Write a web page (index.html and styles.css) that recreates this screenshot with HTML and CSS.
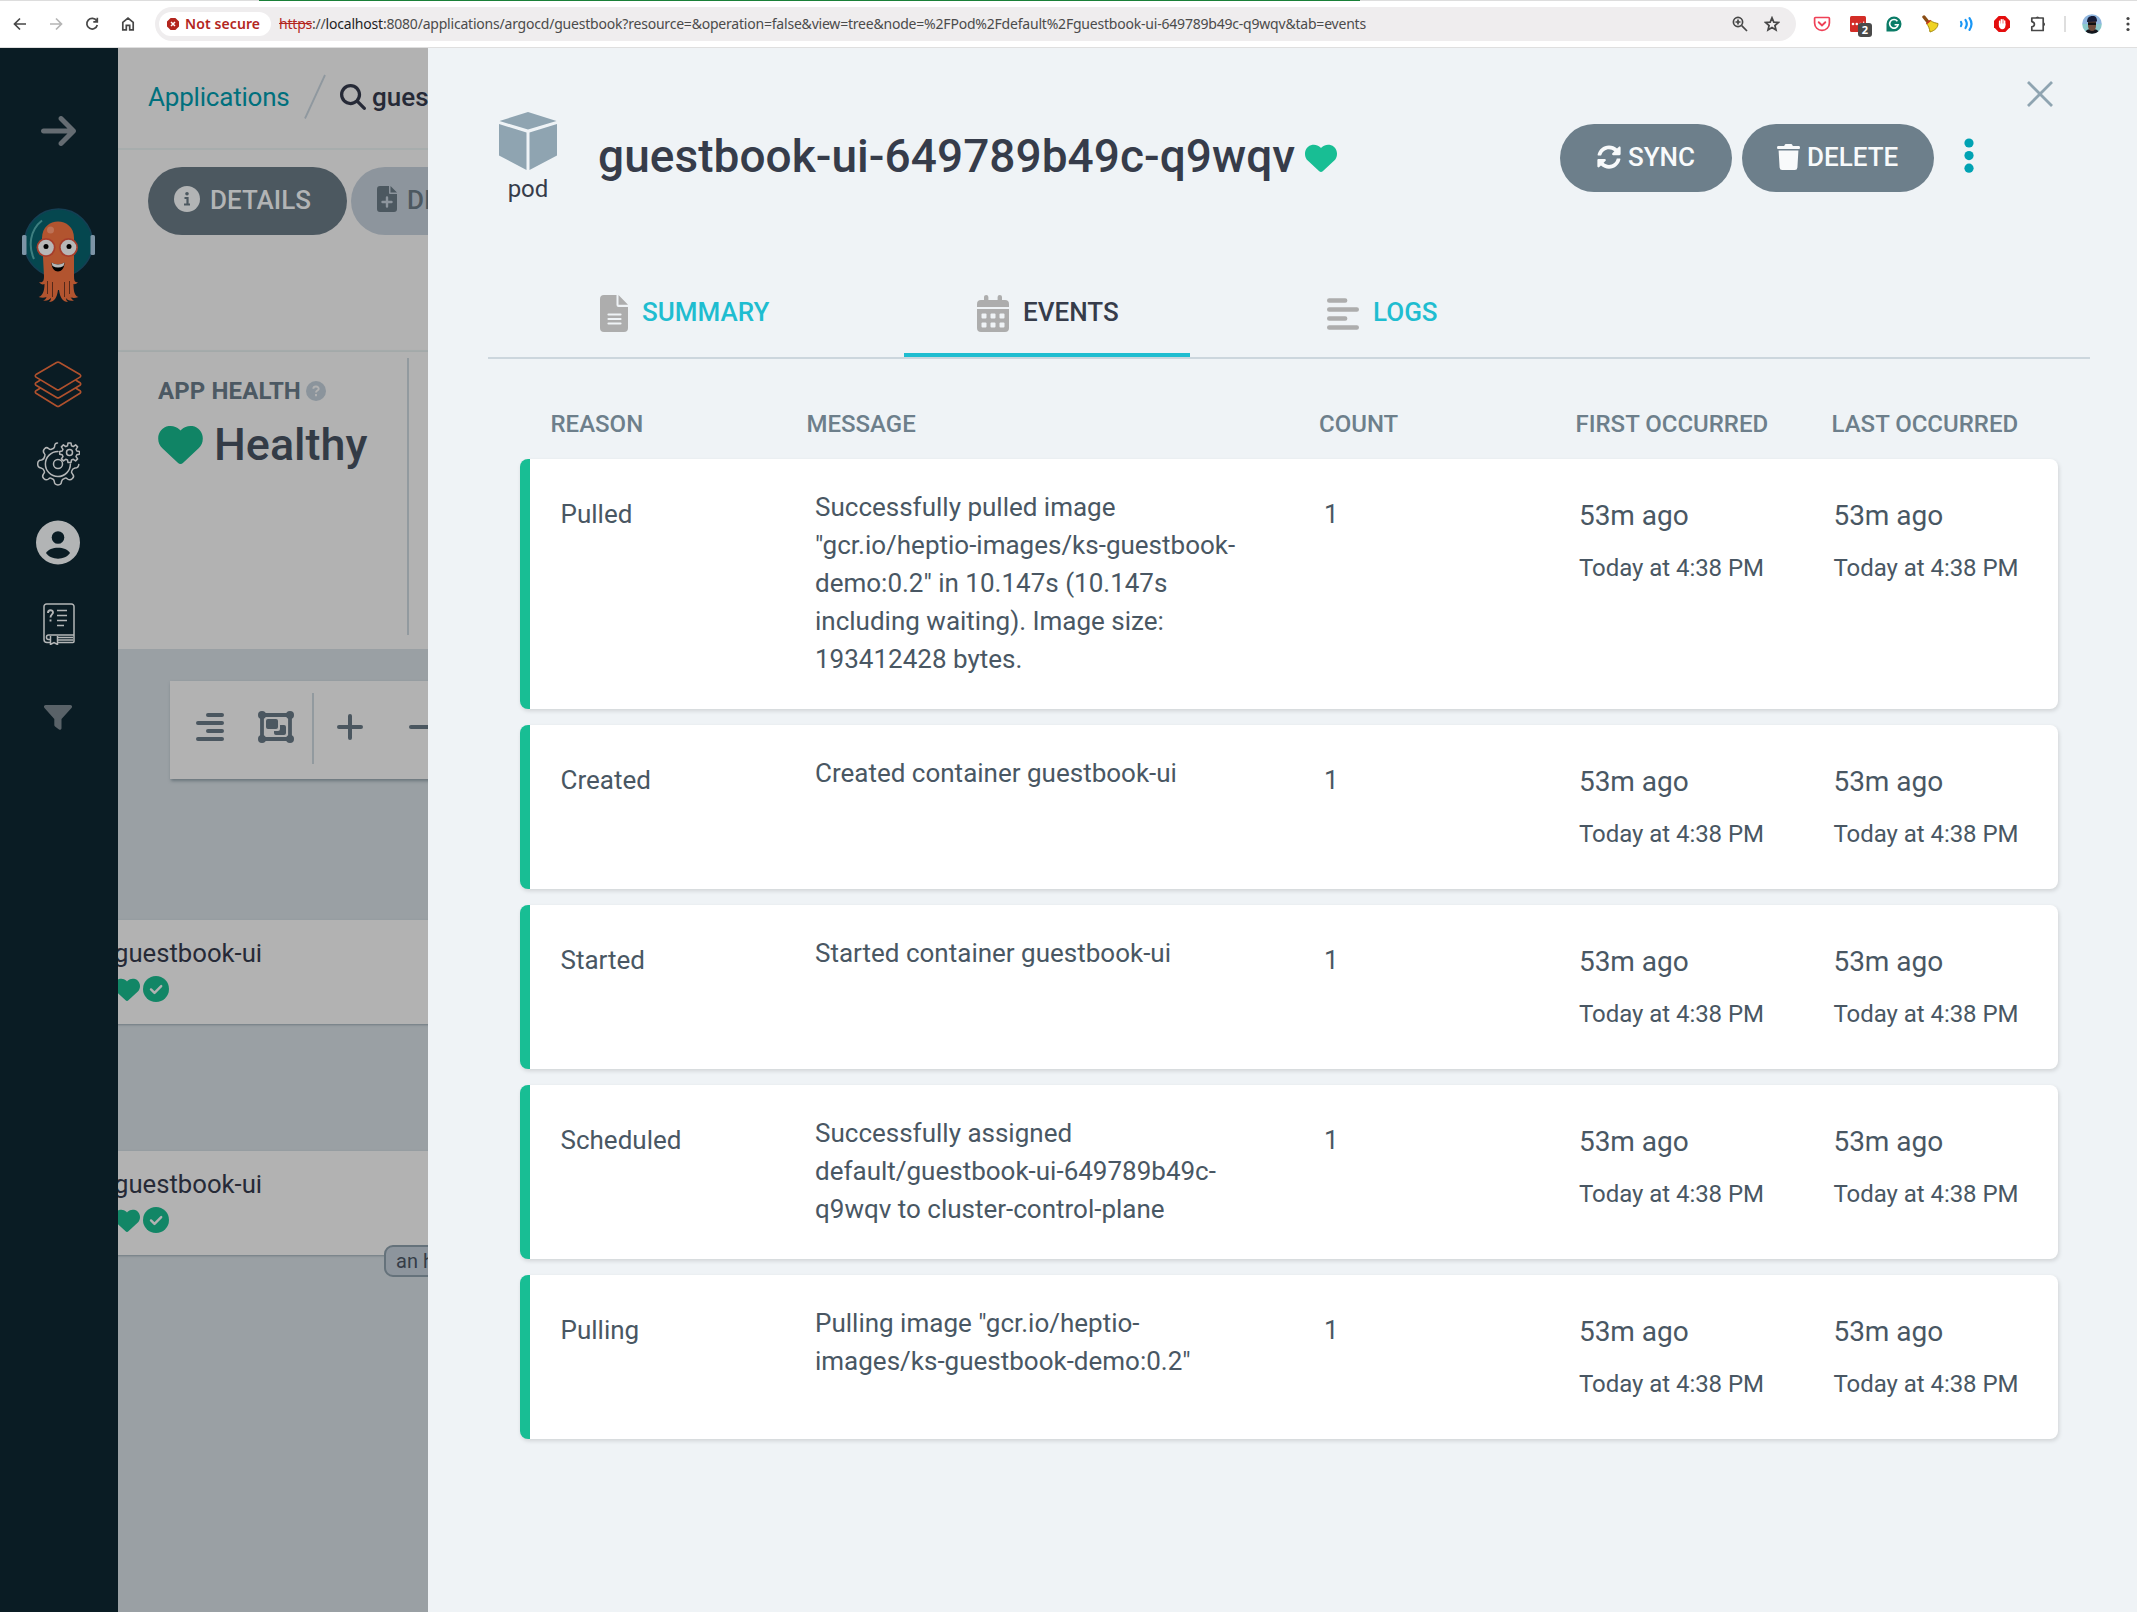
FILE: index.html
```html
<!DOCTYPE html>
<html lang="en">
<head>
<meta charset="utf-8">
<title>guestbook - Argo CD</title>
<link rel="stylesheet" href="styles.css">
</head>
<body>
<svg class="defs" width="0" height="0">
  <symbol id="heart" viewBox="0 32 512 448"><path d="M47.6 300.4L228.3 469.1c7.500 7 17.400 10.900 27.700 10.900s20.200-3.900 27.700-10.900L464.400 300.400c30.400-28.300 47.600-68 47.600-109.500v-5.800c0-69.900-50.500-129.500-119.400-141C347 36.500 300.600 51.400 268 84L256 96 244 84c-32.600-32.600-79-47.500-124.600-39.900C50.500 55.600 0 115.200 0 185.100v5.800c0 41.500 17.200 81.200 47.600 109.500z"/></symbol>
  <symbol id="check" viewBox="0 0 26 26"><circle cx="13" cy="13" r="13"/><path d="M8 13.400l3.500 3.500 6.700-6.800" fill="none" stroke="#b2b2b2" stroke-width="2.400" stroke-linecap="round" stroke-linejoin="round"/></symbol>
</svg>

<header class="browser">
  <div class="nav">
    <svg width="16" height="16" viewBox="0 0 16 16"><path d="M14 8H3M8 2.500L2.500 8 8 13.500"/></svg>
    <svg class="dim" width="16" height="16" viewBox="0 0 16 16"><path d="M2 8h11M8 2.500L13.500 8 8 13.500"/></svg>
    <svg width="16" height="16" viewBox="0 0 16 16"><path d="M12.600 4.800A5.300 5.300 0 1 0 13.300 9M13.300 1.800v4h-4"/></svg>
    <svg width="16" height="16" viewBox="0 0 16 16"><path d="M2.800 13.800V6.300L8 2.200l5.200 4.100v7.500H9.700V9.300H6.300v4.500z"/></svg>
  </div>
  <div class="omnibox">
    <div class="chip">
      <svg width="12" height="12" viewBox="0 0 12 12"><path d="M3.600 0h4.800L12 3.600v4.800L8.400 12H3.600L0 8.400V3.600z" fill="#b3261e"/><path d="M4 4l4 4M8 4L4 8" stroke="#fff" stroke-width="1.500"/></svg>
      <span>Not secure</span>
    </div>
    <div class="url"><s>https</s>://<b>localhost</b>:8080/applications/argocd/guestbook?resource=&amp;operation=false&amp;view=tree&amp;node=%2FPod%2Fdefault%2Fguestbook-ui-649789b49c-q9wqv&amp;tab=events</div>
    <svg class="zoomic" width="16" height="16" viewBox="0 0 16 16"><path d="M9.700 9.700L15 15M3.500 6h5M6 3.500v5"/><circle cx="6" cy="6" r="4.600"/></svg>
    <svg class="star" width="16" height="16" viewBox="0 0 16 16"><path d="M8 1.800l1.800 4.300 4.600.4-3.500 3 1.100 4.500L8 11.600 4 14l1.100-4.500-3.500-3 4.600-.4z"/></svg>
  </div>
  <div class="extensions">
    <svg width="18" height="18" viewBox="0 0 18 18"><path d="M2.500 2.500h13a.9.9 0 0 1 .9.900V8a7.400 7.400 0 0 1-14.800 0V3.400a.9.9 0 0 1 .9-.9z" fill="none" stroke="#ef4056" stroke-width="1.700"/><path d="M5.700 7.200L9 10.400l3.300-3.200" fill="none" stroke="#ef4056" stroke-width="1.900" stroke-linecap="round"/></svg>
    <div class="ext"><svg width="18" height="18" viewBox="0 0 18 18"><rect x="1" y="1" width="16" height="16" rx="1.500" fill="#d32d27"/><g fill="#fff"><circle cx="4" cy="9" r="1.300"/><circle cx="7.800" cy="9" r="1.300"/><circle cx="11.600" cy="9" r="1.300"/><rect x="14.200" y="6.500" width="1" height="4"/></g></svg><span class="count">2</span></div>
    <svg width="18" height="18" viewBox="0 0 18 18"><path d="M9 1.500A7.500 7.500 0 1 1 9 16.500H1.500V9A7.500 7.500 0 0 1 9 1.500z" fill="#0b7c67"/><path d="M12.400 6.200A4.300 4.300 0 1 0 13.200 9.700H9.600" fill="none" stroke="#fff" stroke-width="1.600"/></svg>
    <svg width="18" height="18" viewBox="0 0 18 18"><path d="M3 2l4 5" stroke="#8a4d14" stroke-width="3.400" stroke-linecap="round"/><path d="M5.500 8.500L9.500 5.500C12 7.500 14.500 8 17 8.500c0 4-3 7-8 8.500C8.500 13.500 7.500 11 5.500 8.500z" fill="#f0d321" stroke="#a68a10"/><path d="M5.400 8.600L9.500 5.400" stroke="#c8321b" stroke-width="1.500"/></svg>
    <svg width="18" height="18" viewBox="0 0 18 18" fill="none" stroke="#1a97f5" stroke-width="2.200" stroke-linecap="round"><path d="M4 7q1.300 2 0 4M8.500 5q2.600 4 0 8M12.500 3.200q4 5.800 0 11.600"/></svg>
    <svg width="18" height="18" viewBox="0 0 18 18"><path d="M5.700 1h6.600L17 5.700v6.600L12.300 17H5.700L1 12.300V5.700z" fill="#e40d0d"/><path d="M6.600 10V6.200M8.300 9V4.600M10 9V4.600M11.700 10V6" stroke="#fff" stroke-width="1.400" stroke-linecap="round"/><path d="M5.900 8.500h6.500V11c0 2-1.300 3.200-3.100 3.200-2 0-3.400-1.700-3.400-3.700z" fill="#fff"/></svg>
    <svg class="puzzle" width="18" height="18" viewBox="0 0 18 18"><path d="M2.800 3h11.400v12.500H2.800v-3.700q2.600-.5 2.600-2.600T2.800 6.600z" stroke-linejoin="round"/><path d="M6.600 3a2 2 0 0 1 3.900 0zM14.500 7.300a2 2 0 0 1 0 3.900z" fill="#474747" stroke="none"/></svg>
    <i class="bar"></i>
    <svg width="20" height="20" viewBox="0 0 20 20"><clipPath id="av"><circle cx="10" cy="10" r="9.800"/></clipPath><g clip-path="url(#av)"><path fill="#8fb6df" d="M0 0h20v10H0z"/><path fill="#8ac9cb" d="M0 10h20v10H0z"/><path fill="#15161d" d="M3 20c0-4 3-5 7-5s7 1 7 5z"/><path fill="#6e4c3c" d="M6 7h8v5c0 3-2 5-4 5s-4-2-4-5z"/><path fill="#161c37" d="M5 8c0-4 2-6 5.500-6S15 4 15 7.500z"/><path fill="#111" d="M6 8.500h8V11H6z"/></g></svg>
    <svg class="kebab" width="4" height="16" viewBox="0 0 4 16"><circle cx="2" cy="2.500" r="1.600"/><circle cx="2" cy="8" r="1.600"/><circle cx="2" cy="13.500" r="1.600"/></svg>
  </div>
</header>

<div class="app">
  <nav class="sidebar">
    <svg class="s-arrow" width="35" height="30" viewBox="0 64 448 384"><path fill="#656c72" d="M438.600 278.600c12.500-12.500 12.500-32.800 0-45.300l-160-160c-12.500-12.500-32.800-12.500-45.300 0s-12.500 32.800 0 45.300L338.800 224 32 224c-17.700 0-32 14.300-32 32s14.300 32 32 32l306.700 0L233.400 393.400c-12.500 12.500-12.500 32.800 0 45.300s32.800 12.500 45.300 0l160-160z"/></svg>
    <svg class="s-logo" width="74" height="96" viewBox="0 0 74 96">
      <circle cx="36.500" cy="35" r="34" fill="#05474f" stroke="#153f54" stroke-width="1.500"/>
      <rect x="0" y="27" width="4.500" height="20" rx="1.500" fill="#7d94a6"/><rect x="68.500" y="27" width="4.500" height="20" rx="1.500" fill="#7d94a6"/>
      <path d="M20 12.500C8 22 6 38 12 51" fill="none" stroke="#3e7f80" stroke-width="2"/>
      <path d="M20 30C20 8 52 8 52 30v38c0 5 1 7 4 6-2 3-4 2-4.500 2 0 7 1 12 5 13-4 1.500-7 1-8 0 1 2 2 3 3.500 3.500-4 1-7-.5-8-2.500 0 2 1 3 2 4-5 0-8-4-9-12h-1c-1 8-4 12-9 12 1-1 2-2 2-4-2 2-4 3-8 2.500 2-.5 3-1.500 3.500-3.500-2 1-5 1-8 0 4-1 6-6 6-13-2 1-4 0-5.500-2 4 1 5-1 5-6z" fill="#b2542f"/>
      <g stroke="#55291a" stroke-width="1"><path d="M25.500 73v13M30.500 74v15M42.500 74v15M47.500 73v13"/></g>
      <circle cx="28.500" cy="22" r="3.500" fill="#bd7256"/>
      <circle cx="24" cy="39.500" r="9.500" fill="#a63d2b"/><circle cx="46.500" cy="39.500" r="9.500" fill="#a63d2b"/>
      <circle cx="24" cy="39.500" r="7.800" fill="#b7b7b7"/><circle cx="46.500" cy="39.500" r="7.800" fill="#b7b7b7"/>
      <circle cx="24" cy="38.500" r="2.500"/><circle cx="47" cy="38.500" r="2.500"/>
      <path d="M29.500 54.500q6.500 4 13 0c0 12-13 12-13 0z"/><path d="M29.500 54.500q6.500 4 13 0l-1 3.500q-5.500 3-11 0z" fill="#b7b7b7"/>
    </svg>
    <svg class="s-layers" width="48" height="48" viewBox="0 0 48 48" fill="none" stroke="#b0512d" stroke-width="1.600" stroke-linejoin="round"><path d="M22.600 1.500q1.400-.7 2.800 0L46 13.500q1.500 1.200 0 2.600L25.400 28.500q-1.400.8-2.800 0L2 16.100q-1.500-1.400 0-2.600z"/><path d="M6.500 19L2 21.700q-1.500 1.200 0 2.600l20.600 12.200q1.400.8 2.800 0L46 24.300q1.500-1.400 0-2.600L41.500 19"/><path d="M6.500 27L2 29.700q-1.500 1.200 0 2.600l20.600 12.700q1.400.8 2.800 0L46 32.300q1.500-1.400 0-2.600L41.500 27"/></svg>
    <svg class="s-gears" width="44" height="44" viewBox="0 0 44 44" fill="none" stroke="#b4b6b7" stroke-width="1.500" stroke-linejoin="round" stroke-linecap="round"><circle cx="22" cy="22" r="4.500"/><path d="M22 9.500A12.500 12.500 0 1 0 34.400 22"/><path d="M21.500 1q-3 0-3 4-.5 1.500-3 2.300Q14 8 12.500 6.500C10 4 6 8 8 11q1.500 1.500.8 3Q8 17.500 5.500 18C.5 18 .5 25.500 5 26q2.500.5 3.300 3 .7 1.500-.8 3C5 35 9 39.500 12.500 37q1.500-1.500 3-.5 2.500.5 2.800 3C18.500 44 25.500 44 25.500 39.500q.5-2.500 3-3 1.500-1 3 .5C35 39.500 39.500 35 36.500 32q-1.500-1.500-.8-3 .8-2.500 3.300-3 3.500 0 3.800-3.500"/><circle cx="33.500" cy="10.500" r="3"/><path d="M32 1h3l.5 2.800 1.800.8 2.300-1.700 2 2-1.600 2.400.8 1.700 2.700.5v2.700l-2.700.6-.8 1.700 1.600 2.400-2 2-2.300-1.600-1.800.7L35 20.500h-3l-.5-2.500-1.800-.7-2.300 1.600-2-2 1.600-2.400-.8-1.700-2.500-.6V9.500l2.500-.5.8-1.700-1.600-2.400 2-2 2.300 1.700 1.800-.8z"/></svg>
    <svg class="s-user" width="44" height="45" viewBox="0 0 44 44"><circle cx="22" cy="22" r="22" fill="#b2b4b5"/><circle cx="22" cy="17" r="6.300" fill="#0a1c24"/><path d="M10 32.500c4-7 20-7 24 0-5 7.500-19 7.500-24 0z" fill="#0a1c24"/></svg>
    <svg class="s-book" width="32" height="42" viewBox="0 0 32 42" fill="none" stroke="#b4b6b7" stroke-width="1.500"><path d="M7 39.500H4a3 3 0 0 1-3-3V3.500A2.500 2.500 0 0 1 3.500 1h25A2.500 2.500 0 0 1 31 3.500v35a1 1 0 0 1-1 1H15"/><path d="M31 32H5.500a2 2 0 0 0-2 2v.5a2 2 0 0 0 2 2H7M15 34.500h15M15 37h15M7.500 33v8.500l3.500-2 3.500 2V33M14 7.500h10M14 12.500h10M14 17.500h10M14 22.500h7"/><path d="M5 10c0-3.500 5-3.500 5-.5 0 2-2.500 2-2.500 5M7.500 16.500v2" stroke-width="1.900"/></svg>
    <svg class="s-filter" width="28" height="25" viewBox="0 0 28 25"><path d="M1.500 0h25Q29 .5 27.500 3L17.500 14v9.500Q17 25.500 15 24.500l-4-3q-.7-.6-.7-1.500v-6L.5 3Q-1 .5 1.500 0z" fill="#596268"/></svg>
  </nav>

  <main class="backdrop">
    <div class="crumbs">
      <span class="link">Applications</span>
      <svg class="slash" width="22" height="46" viewBox="0 0 22 46"><path d="M21 1L1 44.500" stroke="#8f989f" stroke-width="1.800"/></svg>
      <svg class="search" width="26" height="26" viewBox="0 0 512 512"><path d="M416 208c0 45.900-14.900 88.300-40 122.700L502.600 457.400c12.500 12.500 12.500 32.800 0 45.300s-32.800 12.500-45.300 0L330.700 376c-34.400 25.200-76.800 40-122.700 40C93.100 416 0 322.900 0 208S93.100 0 208 0S416 93.100 416 208zM208 352a144 144 0 1 0 0-288 144 144 0 1 0 0 288z"/></svg>
      <span class="current">guestbook</span>
    </div>
    <div class="actions">
      <div class="pill"><svg width="26" height="26" viewBox="0 0 26 26"><circle cx="13" cy="13" r="13" fill="#b2b4b5"/><circle cx="13" cy="7.800" r="1.800" fill="#4c5860"/><path d="M10.500 12h3v6M10 18.500h6" stroke="#4c5860" stroke-width="2.200" fill="none"/></svg><span>DETAILS</span></div>
      <div class="pill light"><svg width="20" height="26" viewBox="0 0 20 26"><path d="M3 0h9v7q0 1 1 1h7v15q0 3-3 3H3q-3 0-3-3V3Q0 0 3 0zM13.500 0L20 6.500h-6.500z"/><path d="M10 11.500v9M5.500 16h9" stroke="#8d959d" stroke-width="2.400" stroke-linecap="round"/></svg><span>DIFF</span></div>
    </div>
    <div class="status">
      <section>
        <h4>APP HEALTH <svg width="20" height="20" viewBox="0 0 20 20"><circle cx="10" cy="10" r="10" fill="#8b949c"/><path d="M7.300 7.700c.2-3.200 5.600-2.800 5.400.2-.1 1.700-2.700 1.700-2.700 3.600M10 13v2.200" fill="none" stroke="#b2b2b2" stroke-width="1.900"/></svg></h4>
        <p><svg width="45" height="39"><use href="#heart"/></svg>Healthy</p>
      </section>
    </div>
    <div class="canvas">
      <div class="toolbar">
        <svg class="t-align" width="28" height="28" viewBox="0 0 28 28"><path d="M12 2h14M2 10h24M12 18h14M2 26h24"/></svg>
        <svg class="t-group" width="36" height="32" viewBox="0 0 36 32"><path d="M4 4h28v24H4z" fill="none" stroke="#4b5760" stroke-width="3.800"/><circle cx="4" cy="4" r="4"/><circle cx="32" cy="4" r="4"/><circle cx="4" cy="28" r="4"/><circle cx="32" cy="28" r="4"/><rect x="8" y="8" width="12" height="10" rx="2"/><path d="M22 14h4q2 0 2 2v6q0 2-2 2h-8q-2 0-2-2v-2h4q2 0 2-2z"/></svg>
        <i></i>
        <svg class="t-plus" width="26" height="26" viewBox="0 0 26 26"><path d="M13 2v22M2 13h22"/></svg>
        <svg class="t-minus" width="26" height="26" viewBox="0 0 26 26"><path d="M2 13h22"/></svg>
      </div>
      <div class="node first"><span>guestbook-ui</span><div><svg width="26" height="23"><use href="#heart"/></svg><svg width="26" height="26"><use href="#check"/></svg></div></div>
      <div class="node second"><span>guestbook-ui</span><div><svg width="26" height="23"><use href="#heart"/></svg><svg width="26" height="26"><use href="#check"/></svg></div></div>
      <div class="age">an hour</div>
    </div>
  </main>

  <aside class="panel">
    <svg class="close" width="26" height="26" viewBox="0 0 26 26"><path d="M1 1l24 24M25 1L1 25"/></svg>
    <div class="head">
      <div class="kind">
        <svg width="58" height="58" viewBox="0 0 58 58"><path d="M29 0L57.500 9 29 17.500.5 9zM0 12l27.500 8.500V58L0 43.500zM58 12l-27.500 8.500V58L58 43.500z" fill="#8fa4b1"/></svg>
        <span>pod</span>
      </div>
      <h1>guestbook-ui-649789b49c-q9wqv</h1>
      <svg class="health" width="32" height="28"><use href="#heart"/></svg>
      <div class="buttons">
        <button><svg width="24" height="24" viewBox="0 0 512 512"><path d="M370.720 133.280C339.458 104.008 298.888 87.962 255.848 88c-77.458.068-144.328 53.178-162.791 126.850-1.344 5.363-6.122 9.150-11.651 9.150H24.103c-7.498 0-13.194-6.807-11.807-14.176C33.933 94.924 134.813 8 256 8c66.448 0 126.791 26.136 171.315 68.685L463.030 40.970C478.149 25.851 504 36.559 504 57.941V192c0 13.255-10.745 24-24 24H345.941c-21.382 0-32.090-25.851-16.971-40.971l41.750-41.749zM32 296h134.059c21.382 0 32.090 25.851 16.971 40.971l-41.750 41.750c31.262 29.273 71.835 45.319 114.876 45.280 77.418-.070 144.315-53.144 162.787-126.849 1.344-5.363 6.122-9.150 11.651-9.150h57.304c7.498 0 13.194 6.807 11.807 14.176C478.067 417.076 377.187 504 256 504c-66.448 0-126.791-26.136-171.315-68.685L48.970 471.030C33.851 486.149 8 475.441 8 454.059V320c0-13.255 10.745-24 24-24z"/></svg><span>SYNC</span></button>
        <button><svg class="trash" width="23" height="26" viewBox="0 0 23 26"><path d="M7.500 1.200Q8 0 9 0h5q1 0 1.500 1.200l.3.700H22q1 0 1 1.600T22 5H1Q0 5 0 3.500t1-1.600h6.200zM1.600 6.500h19.800l-1 17q-.2 2.500-2.600 2.500H5.200q-2.400 0-2.600-2.500z"/></svg><span>DELETE</span></button>
        <svg class="more" width="10" height="36" viewBox="0 0 10 36"><circle cx="5" cy="5" r="4.600"/><circle cx="5" cy="17.600" r="4.600"/><circle cx="5" cy="30.200" r="4.600"/></svg>
      </div>
    </div>
    <div class="tabs">
      <div class="tab summary"><svg width="28" height="37" viewBox="0 0 28 37"><path d="M4 0h12.500v10q0 2 2 2H28v21q0 4-4 4H4q-4 0-4-4V4Q0 0 4 0zM18.500 0L28 9.700h-9.500z"/><path d="M8.500 19.500h12M8.500 24h12M8.500 28.500h12" stroke="#eff3f6" stroke-width="2.200" stroke-linecap="round"/></svg>SUMMARY</div>
      <div class="tab active"><svg width="32" height="37" viewBox="0 0 32 37"><path d="M4 5h3V2q0-2 2.200-2t2.200 2v3h9.200V2q0-2 2.200-2T25 2v3h3q4 0 4 4v3H0V9q0-4 4-4zM0 14h32v19q0 4-4 4H4q-4 0-4-4z"/><g fill="#eff3f6"><rect x="4.500" y="18.500" width="5" height="5" rx="1"/><rect x="13.500" y="18.500" width="5" height="5" rx="1"/><rect x="22.500" y="18.500" width="5" height="5" rx="1"/><rect x="4.500" y="27.500" width="5" height="5" rx="1"/><rect x="13.500" y="27.500" width="5" height="5" rx="1"/><rect x="22.500" y="27.500" width="5" height="5" rx="1"/></g></svg>EVENTS</div>
      <div class="tab logs"><svg width="32" height="32" viewBox="0 0 32 32"><path d="M2.200 2.500h16M2.200 11.500h27.600M2.200 20.500h16M2.200 29.500h27.600" stroke="#adadad" stroke-width="4.400" stroke-linecap="round"/></svg>LOGS</div>
    </div>
    <div class="table">
      <div class="thead"><span>REASON</span><span>MESSAGE</span><span>COUNT</span><span>FIRST OCCURRED</span><span>LAST OCCURRED</span></div>
      <div class="row"><span>Pulled</span><p>Successfully pulled image<br>"gcr.io/heptio-images/ks-guestbook-<br>demo:0.2" in 10.147s (10.147s<br>including waiting). Image size:<br>193412428 bytes.</p><span>1</span><div><b>53m ago</b><small>Today at 4:38 PM</small></div><div><b>53m ago</b><small>Today at 4:38 PM</small></div></div>
      <div class="row"><span>Created</span><p>Created container guestbook-ui</p><span>1</span><div><b>53m ago</b><small>Today at 4:38 PM</small></div><div><b>53m ago</b><small>Today at 4:38 PM</small></div></div>
      <div class="row"><span>Started</span><p>Started container guestbook-ui</p><span>1</span><div><b>53m ago</b><small>Today at 4:38 PM</small></div><div><b>53m ago</b><small>Today at 4:38 PM</small></div></div>
      <div class="row"><span>Scheduled</span><p>Successfully assigned<br>default/guestbook-ui-649789b49c-<br>q9wqv to cluster-control-plane</p><span>1</span><div><b>53m ago</b><small>Today at 4:38 PM</small></div><div><b>53m ago</b><small>Today at 4:38 PM</small></div></div>
      <div class="row"><span>Pulling</span><p>Pulling image "gcr.io/heptio-<br>images/ks-guestbook-demo:0.2"</p><span>1</span><div><b>53m ago</b><small>Today at 4:38 PM</small></div><div><b>53m ago</b><small>Today at 4:38 PM</small></div></div>
    </div>
  </aside>
</div>
</body>
</html>
```

FILE: styles.css
```css
* { box-sizing: border-box; }
body { margin: 0; width: 2137px; height: 1612px; overflow: hidden; display: flex; flex-direction: column; font-family: Roboto, sans-serif; }
h1, h4, p { margin: 0; }
svg { display: block; flex: none; }
.defs { position: absolute; }

/* Browser toolbar */
.browser { height: 48px; flex: none; display: flex; align-items: center; background: linear-gradient(90deg, #ddd 259px, #1a8038 259px, #1a8038 1360px, #ddd 1360px) top / 100% 1px no-repeat #fff; border-bottom: 1px solid #dfdfdf; font-family: "Noto Sans", sans-serif; }
.nav { width: 155px; padding-left: 12px; display: flex; gap: 20px; }
.nav svg, .zoomic, .star, .puzzle { fill: none; stroke: #474747; stroke-width: 1.7; }
.nav .dim { stroke: #b5b5b5; }
.omnibox { width: 1641px; height: 34px; border-radius: 17px; background: #efedee; display: flex; align-items: center; padding-left: 4px; }
.chip { flex: none; width: 112px; height: 24px; border-radius: 12px; background: #fff; display: flex; align-items: center; padding-left: 8px; gap: 6px; color: #b3261e; font-size: 14px; font-weight: 600; letter-spacing: .1px; white-space: nowrap; }
.url { flex: none; margin-left: 8px; width: 1453px; font-size: 14px; color: #4b4b4b; white-space: nowrap; letter-spacing: -.207px; }
.url s { color: #b3261e; }
.url b { color: #1f1f1f; font-weight: 400; }
.star { margin-left: 16px; }
.extensions { display: flex; align-items: center; gap: 18px; margin-left: 17px; }
.ext { position: relative; }
.count { position: absolute; left: 9px; top: 8px; width: 14px; height: 14px; border-radius: 3px; background: #4a4a4a; color: #fff; font-size: 11px; font-weight: 700; line-height: 14px; text-align: center; }
.bar { width: 2px; height: 16px; background: #dedede; margin: 0 -1.5px; }
.kebab { fill: #444; margin-left: 6px; }

.app { flex: 1; display: flex; }

/* Sidebar */
.sidebar { width: 118px; background: #0a1c24; display: flex; flex-direction: column; align-items: flex-start; }
.s-arrow { margin: 68px 0 0 41px; }
.s-logo { margin: 62px 0 0 22px; }
.s-layers { margin: 57px 0 0 34px; }
.s-gears { margin: 33px 0 0 36px; }
.s-user { margin: 34px 0 0 36px; }
.s-book { margin: 38px 0 0 43px; }
.s-filter { margin: 60px 0 0 44px; }

/* Dimmed application page */
.backdrop { width: 310px; overflow: hidden; background: #b2b2b2; display: flex; flex-direction: column; white-space: nowrap; }
.crumbs { height: 102px; flex: none; border-bottom: 2px solid #a7adad; padding: 0 0 2px 30px; display: flex; align-items: center; font-size: 26px; }
.link { color: #00707d; width: 141px; letter-spacing: -.2px; }
.slash { margin-left: 15px; }
.search { margin-left: 14px; fill: #262a37; }
.current { margin-left: 6px; font-weight: 500; color: #262a37; }
.actions { height: 202px; flex: none; border-bottom: 2px solid #a7adad; padding: 17px 0 0 30px; display: flex; gap: 4px; }
.pill { height: 68px; width: 199px; flex: none; border-radius: 34px; background: #4c5860; color: #b2b4b5; display: flex; align-items: center; padding: 0 0 4px 26px; gap: 10px; font-size: 26px; font-weight: 500; }
.pill span { padding-top: 2px; }
.pill.light { background: #8d959d; color: #4c5860; fill: #4c5860; }
.status { height: 297px; flex: none; padding-top: 6px; box-shadow: 1px 2px 4px rgba(70, 85, 95, .3); position: relative; }
.status section { width: 291px; height: 277px; border-right: 2px solid #929a9f; padding: 17px 0 0 40px; }
.status h4 { display: flex; align-items: center; gap: 5px; height: 32px; font-size: 24px; letter-spacing: .12px; font-weight: 700; color: #4c5963; }
.status p { display: flex; align-items: center; gap: 11px; margin-top: 12px; height: 50px; font-size: 44.9px; font-weight: 500; color: #333b46; fill: #108465; }
.canvas { flex: 1; background: #9aa0a4; position: relative; overflow: hidden; }
.toolbar { margin: 32px 0 0 52px; height: 98px; width: 400px; background: #b2b2b2; box-shadow: 1px 2px 3px rgba(60, 75, 85, .5); display: flex; align-items: center; padding: 0 0 6px 26px; fill: #4b5760; stroke-linecap: round; }
.t-align, .t-plus, .t-minus { stroke: #4b5760; stroke-width: 4; }
.t-group { margin-left: 34px; }
.toolbar i { width: 2px; height: 71px; margin: 2px 23px 0 18px; background: #929a9f; }
.t-minus { margin-left: 46px; }
.node { position: absolute; left: -10px; width: 400px; height: 104px; background: #b2b2b2; box-shadow: 1px 1px 2px rgba(70, 85, 95, .5); font-size: 25.7px; line-height: 30px; color: #262a37; padding: 18px 0 0 6px; }
.node div { display: flex; align-items: center; gap: 3px; margin: 8px 0 0; fill: #128666; }
.first { top: 271px; }
.second { top: 502px; }
.age { position: absolute; left: 266px; top: 596px; width: 120px; height: 32px; border: 2px solid #65727b; border-radius: 9px; background: #8d959d; color: #353d48; font-size: 20px; line-height: 28px; padding-left: 10px; }

/* Resource details panel */
.panel { flex: 1; background: #eff3f6; display: flex; flex-direction: column; }
.close { margin: 33px 0 0 1599px; stroke: #8fa4b1; stroke-width: 2.8; }
.head { height: 169px; margin: 5px 0 0 60px; display: flex; color: #363c4a; }
.kind { width: 80px; margin-right: 30px; display: flex; flex-direction: column; align-items: center; font-size: 24px; line-height: 28px; }
.kind span { margin-top: 5px; }
.head h1 { width: 697px; font-size: 46px; letter-spacing: .05px; line-height: 54px; font-weight: 500; margin-top: 17px; white-space: nowrap; }
.health { margin: 32px 0 0 10px; fill: #18be94; }
.buttons { display: flex; gap: 10px; margin: 12px 0 0 223px; height: 68px; }
.buttons button { border: 0; border-radius: 34px; width: 172px; background: #6d7f8b; color: #f8fafb; fill: #f8fafb; display: flex; align-items: center; padding: 0 0 2px 37px; gap: 7px; font: 500 26px Roboto, sans-serif; }
.buttons button + button { width: 192px; padding-left: 35px; }
.more { margin: 14px 0 0 20px; fill: #00a2b3; }
.tabs { width: 1602px; height: 78px; margin-left: 60px; border-bottom: 2px solid #ccd6dd; display: flex; font-size: 26px; font-weight: 500; color: #1fbdd0; fill: #adadad; }
.tab { display: flex; align-items: center; gap: 14px; height: 76px; padding-bottom: 14px; }
.tab svg { margin-top: 3px; }
.summary { width: 416px; padding-left: 112px; }
.active { width: 286px; padding-left: 73px; color: #363c4a; border-bottom: 4px solid #1fbdd0; padding-bottom: 10px; }
.logs { padding-left: 137px; }
.table { width: 1538px; margin: 35px 0 0 92px; }
.thead { display: grid; grid-template-columns: 256px 512.5px 256.5px 256px 1fr; padding-left: 30.5px; height: 65px; line-height: 60px; font-size: 24px; font-weight: 500; color: #6d7f8b; white-space: nowrap; }
.row { display: grid; grid-template-columns: 254.5px 509px 255px 254.5px 1fr; align-items: start; min-height: 164px; margin-bottom: 16px; padding: 29px 0 31px 30.5px; border-left: 10px solid #18be94; border-radius: 8px; background: #fff; box-shadow: 1px 2px 4px rgba(0, 0, 0, .13); color: #495763; font-size: 26px; line-height: 38px; white-space: nowrap; }
.row > span { margin-top: 7px; }
.row b { display: block; font-size: 28px; font-weight: 400; margin-top: 9px; letter-spacing: -.05px; }
.row small { display: block; font-size: 24px; letter-spacing: -.05px; line-height: 28px; margin-top: 19px; }
.row > div { height: 104px; overflow: visible; }
```
